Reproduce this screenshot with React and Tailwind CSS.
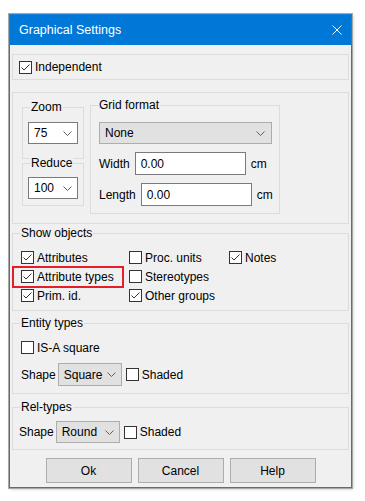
import React from 'react';

const Check = ({ checked }) => (
  <span className="w-[13px] h-[13px] border border-[#333] bg-white flex items-center justify-center shrink-0">
    {checked && (
      <svg width="11" height="11" viewBox="0 0 11 11">
        <path d="M1.5 5.5 L4 8 L9.5 2.5" fill="none" stroke="#333" strokeWidth="1" />
      </svg>
    )}
  </span>
);

const CheckItem = ({ checked, label }) => (
  <div className="h-[19px] flex items-center gap-[3px]">
    <Check checked={checked} />
    <span className="leading-[16px] whitespace-nowrap">{label}</span>
  </div>
);

const Chevron = () => (
  <svg width="9" height="5" viewBox="0 0 9 5" className="shrink-0">
    <polyline points="0.5,0.5 4.5,4.5 8.5,0.5" fill="none" stroke="#606060" strokeWidth="1" />
  </svg>
);

const Select = ({ value, className }) => (
  <div className={`flex items-center justify-between pl-[5px] pr-[5px] border ${className}`}>
    <span className="leading-[16px]">{value}</span>
    <Chevron />
  </div>
);

const Group = ({ label, className, children }) => (
  <div className={`relative border border-[#dcdcdc] ${className}`}>
    {label && (
      <span className="absolute -top-[9px] left-[7px] bg-[#f0f0f0] px-[1px] leading-[16px] whitespace-nowrap">
        {label}
      </span>
    )}
    {children}
  </div>
);

const Button = ({ children }) => (
  <button className="w-[86px] h-[25px] border border-[#adadad] bg-[#e1e1e1] leading-[16px]">
    {children}
  </button>
);

export default function App() {
  return (
    <div className="w-[365px] h-[501px] bg-white pt-[14px] pl-[9px] font-['Liberation_Sans',Arial,sans-serif] text-[12px] text-black overflow-hidden">
      <div className="w-[343px] h-[474px] border border-[#1a7fd4] bg-[#f0f0f0] flex flex-col shadow-[0_0_0_1px_#a8a8a8,1px_1px_3px_rgba(0,0,0,0.25)]">
        {/* Title bar */}
        <div className="h-[30px] bg-[#0078d7] text-white flex items-center justify-between pl-[9px] pr-[9px] shrink-0">
          <span className="text-[12.5px] leading-[16px]">Graphical Settings</span>
          <svg width="10" height="10" viewBox="0 0 10 10">
            <path d="M0.5 0.5 L9.5 9.5 M9.5 0.5 L0.5 9.5" stroke="#fff" strokeWidth="1" />
          </svg>
        </div>

        <div className="px-[2px] flex flex-col">
          {/* Independent */}
          <Group className="mt-[9px] h-[26px] flex items-center pl-[6px]">
            <div className="flex items-center gap-[3px]">
              <Check checked />
              <span className="leading-[16px]">Independent</span>
            </div>
          </Group>

          {/* Zoom / grid */}
          <Group className="mt-[12px] h-[132px] flex items-start pl-[9px]">
            <div className="flex flex-col">
              <Group label="Zoom" className="mt-[14px] w-[62px] h-[52px] pt-[14px] pl-[5px]">
                <Select value="75" className="w-[50px] h-[22px] bg-white border-[#7a7a7a]" />
              </Group>
              <Group label="Reduce" className="mt-[4px] w-[62px] h-[43px] pt-[13px] pl-[5px]">
                <Select value="100" className="w-[50px] h-[22px] bg-white border-[#7a7a7a]" />
              </Group>
            </div>
            <Group label="Grid format" className="ml-[6px] mt-[12px] w-[190px] h-[109px] pt-[16px] pl-[8px]">
              <Select value="None" className="w-[173px] h-[22px] bg-[#e1e1e1] border-[#adadad] pr-[6px]" />
              <div className="mt-[8px] flex items-center gap-[5px]">
                <span className="leading-[16px]">Width</span>
                <div className="w-[111px] h-[23px] border border-[#7a7a7a] bg-white flex items-center pl-[5px]">0.00</div>
                <span className="leading-[16px]">cm</span>
              </div>
              <div className="mt-[8px] flex items-center gap-[5px]">
                <span className="leading-[16px]">Length</span>
                <div className="w-[111px] h-[23px] border border-[#7a7a7a] bg-white flex items-center pl-[5px]">0.00</div>
                <span className="leading-[16px]">cm</span>
              </div>
            </Group>
          </Group>

          {/* Show objects */}
          <Group label="Show objects" className="mt-[9px] h-[78px] pt-[14px] pl-[8px]">
            <div className="grid grid-cols-[108px_100px_100px]">
              <CheckItem checked label="Attributes" />
              <CheckItem label="Proc. units" />
              <CheckItem checked label="Notes" />
              <div className="relative">
                <CheckItem checked label="Attribute types" />
                <div className="absolute -top-[1px] -left-[9px] w-[112px] h-[22px] border-2 border-[#e3202a]" />
              </div>
              <CheckItem label="Stereotypes" />
              <div />
              <CheckItem checked label="Prim. id." />
              <CheckItem checked label="Other groups" />
            </div>
          </Group>

          {/* Entity types */}
          <Group label="Entity types" className="mt-[12px] h-[71px] pt-[14px] pl-[8px]">
            <CheckItem label="IS-A square" />
            <div className="mt-[6px] flex items-center">
              <span className="leading-[16px] mr-[2px]">Shape</span>
              <Select value="Square" className="w-[64px] h-[23px] bg-[#e1e1e1] border-[#adadad]" />
              <div className="ml-[4px] flex items-center gap-[3px]">
                <Check />
                <span className="leading-[16px]">Shaded</span>
              </div>
            </div>
          </Group>

          {/* Rel-types */}
          <Group label="Rel-types" className="mt-[13px] h-[43px] pt-[13px] pl-[6px]">
            <div className="flex items-center">
              <span className="leading-[16px] mr-[2px]">Shape</span>
              <Select value="Round" className="w-[64px] h-[22px] bg-[#e1e1e1] border-[#adadad]" />
              <div className="ml-[4px] flex items-center gap-[3px]">
                <Check />
                <span className="leading-[16px]">Shaded</span>
              </div>
            </div>
          </Group>

          {/* Buttons */}
          <div className="mt-[8px] flex justify-center gap-[6px]">
            <Button>Ok</Button>
            <Button>Cancel</Button>
            <Button>Help</Button>
          </div>
        </div>
      </div>
    </div>
  );
}
